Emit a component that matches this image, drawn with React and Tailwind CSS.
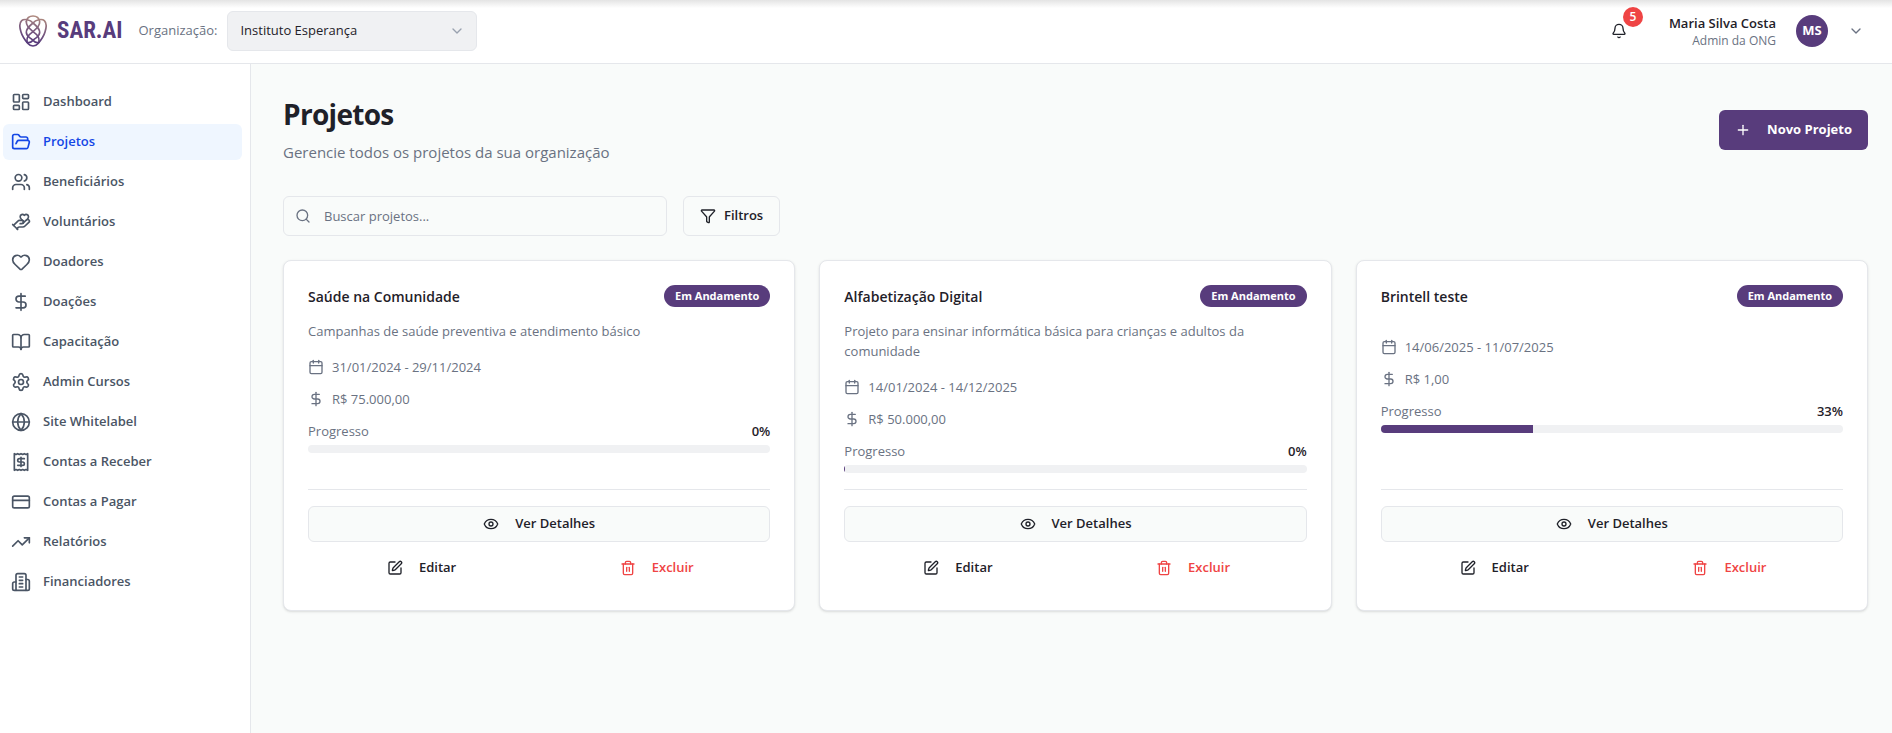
import React from "react";
import {
  LayoutDashboard, FolderOpen, Users, HandHeart, Heart, DollarSign, BookOpen, Settings, Globe,
  CreditCard, TrendingUp, Bell, ChevronDown, Plus, Search, Funnel, Calendar, Eye, SquarePen, Trash2,
} from "lucide-react";

function ReceiptIcon({ className }) {
  return (
    <svg className={className} viewBox="0 0 24 24" fill="none" stroke="currentColor" strokeWidth="2" strokeLinecap="round" strokeLinejoin="round" aria-hidden="true">
      <path d="M4 2v20l2-1 2 1 2-1 2 1 2-1 2 1 2-1 2 1V2l-2 1-2-1-2 1-2-1-2 1-2-1-2 1Z" />
      <path d="M16 8h-6a2 2 0 1 0 0 4h4a2 2 0 1 1 0 4H8" />
      <path d="M12 17.5v-11" />
    </svg>
  );
}

function BuildingIcon({ className }) {
  return (
    <svg className={className} viewBox="0 0 24 24" fill="none" stroke="currentColor" strokeWidth="2" strokeLinecap="round" strokeLinejoin="round" aria-hidden="true">
      <path d="M6 22V4a2 2 0 0 1 2-2h8a2 2 0 0 1 2 2v18Z" />
      <path d="M6 12H4a2 2 0 0 0-2 2v6a2 2 0 0 0 2 2h2" />
      <path d="M18 9h2a2 2 0 0 1 2 2v9a2 2 0 0 1-2 2h-2" />
      <path d="M10 6h4M10 10h4M10 14h4M10 18h4" />
    </svg>
  );
}

function LogoMark() {
  return (
    <svg className="h-8 w-7 shrink-0" viewBox="0 0 84 96" fill="none" stroke="url(#mark)" strokeWidth="5" strokeLinecap="round" strokeLinejoin="round" aria-hidden="true">
      <defs>
        <linearGradient id="mark" gradientUnits="userSpaceOnUse" x1="54" y1="0" x2="34" y2="80">
          <stop offset="0" stopColor="#b58f7e" />
          <stop offset="0.5" stopColor="#80607f" />
          <stop offset="1" stopColor="#583c7c" />
        </linearGradient>
      </defs>
      <path d="M22 20C24 8 33 3 42 3s18 5 20 17c1 12-10 22-20 30-12 9-20 16-18 30" />
      <path d="M22 20c-1 12 10 22 20 30 12 9 20 16 18 30" />
      <path d="M42 24C34 14 15 10 8 17s-6 22-2 34c4 14 12 24 20 34 4 5 9 8 16 8s12-3 16-8c8-10 16-20 20-34 4-12 5-27-2-34s-26-3-34 7" />
      <path d="M42 24c-10 8-20 16-20 28 0 14 10 14 20 24 6 6 12 8 18 6" />
      <path d="M42 24c10 8 20 16 20 28 0 14-10 14-20 24-6 6-12 8-18 6" />
    </svg>
  );
}

const navItems = [
  ["Dashboard", LayoutDashboard],
  ["Projetos", FolderOpen],
  ["Beneficiários", Users],
  ["Voluntários", HandHeart],
  ["Doadores", Heart],
  ["Doações", DollarSign],
  ["Capacitação", BookOpen],
  ["Admin Cursos", Settings],
  ["Site Whitelabel", Globe],
  ["Contas a Receber", ReceiptIcon],
  ["Contas a Pagar", CreditCard],
  ["Relatórios", TrendingUp],
  ["Financiadores", BuildingIcon],
];

const projects = [
  {
    title: "Saúde na Comunidade",
    description: "Campanhas de saúde preventiva e atendimento básico",
    dates: "31/01/2024 - 29/11/2024",
    budget: "R$ 75.000,00",
    label: "0%",
    progress: 0,
  },
  {
    title: "Alfabetização Digital",
    description: "Projeto para ensinar informática básica para crianças e adultos da comunidade",
    dates: "14/01/2024 - 14/12/2025",
    budget: "R$ 50.000,00",
    label: "0%",
    progress: 0.2,
  },
  {
    title: "Brintell teste",
    description: "",
    dates: "14/06/2025 - 11/07/2025",
    budget: "R$ 1,00",
    label: "33%",
    progress: 33,
  },
];

function Header() {
  return (
    <header className="flex h-16 items-center justify-between border-b border-gray-200 bg-linear-to-b from-[#e4e4e4] to-white to-[8px] pr-7 pb-px pl-[19px]">
      <div className="flex items-center">
        <a href="#" aria-label="SAR.AI" className="flex items-center gap-2.5">
          <LogoMark />
          <span className="font-['Roboto_Condensed',Roboto,sans-serif] text-[23px] leading-8 font-bold text-[#583c7c]">SAR.AI</span>
        </a>
        <label htmlFor="org" className="ml-4 text-[13px] text-gray-500">Organização:</label>
        <div className="relative ml-2.5 w-[250px]">
          <select id="org" className="h-10 w-full appearance-none rounded-md border border-gray-200 bg-[#f0f1f3] px-3 text-[13px] text-[#1f2129]">
            <option>Instituto Esperança</option>
          </select>
          <ChevronDown className="pointer-events-none absolute top-3 right-3 size-4 text-gray-400" />
        </div>
      </div>
      <div className="flex items-center">
        <button type="button" aria-label="Notificações" className="relative flex size-10 items-center justify-center text-[#1f2129]">
          <Bell className="size-4" />
          <span className="absolute -top-1 -right-1 flex size-5 items-center justify-center rounded-full bg-[#ef4444] text-[12px] font-semibold text-white">5</span>
        </button>
        <button type="button" className="ml-[30px] flex items-center">
          <span className="flex flex-col text-right">
            <span className="text-[13px] leading-5 font-semibold text-[#1f2129]">Maria Silva Costa</span>
            <span className="text-[12px] leading-4 font-medium text-gray-500">Admin da ONG</span>
          </span>
          <span className="ml-5 flex size-8 items-center justify-center rounded-full bg-[#583c7c] text-[13px] font-bold text-white">MS</span>
          <ChevronDown className="ml-5 size-4 text-gray-500" />
        </button>
      </div>
    </header>
  );
}

function Sidebar() {
  return (
    <nav className="flex w-[251px] shrink-0 flex-col gap-1 border-r border-gray-200 bg-white pt-5 pr-2 pl-[3px]">
      {navItems.map(([label, Icon]) => (
        <a
          key={label}
          href="#"
          className={
            label === "Projetos"
              ? "flex h-9 items-center gap-3 rounded-md bg-blue-50 px-2 text-[13px] font-semibold text-blue-700"
              : "flex h-9 items-center gap-3 rounded-md px-2 text-[13px] font-semibold text-gray-600"
          }
        >
          <Icon className="size-5" />
          {label}
        </a>
      ))}
    </nav>
  );
}

function ProjectCard({ project }) {
  return (
    <article className="flex flex-col rounded-lg border border-gray-200 bg-white p-6 shadow-sm">
      <div className="flex items-start justify-between">
        <h2 className="text-[14px] leading-6 font-semibold text-[#1f2129]">{project.title}</h2>
        <span className="rounded-full bg-[#583c7c] px-[11px] py-[3px] text-[11px] leading-4 font-bold text-white">Em Andamento</span>
      </div>
      <p className="mt-3 text-[13px] leading-5 text-gray-500">{project.description}</p>
      <div className="mt-4 mb-4 flex flex-col gap-3 text-[13px] leading-5 text-gray-500">
        <div className="flex items-center gap-2"><Calendar className="size-4" />{project.dates}</div>
        <div className="flex items-center gap-2"><DollarSign className="size-4" />{project.budget}</div>
        <div className="flex flex-col gap-1">
          <div className="flex justify-between">
            <span>Progresso</span>
            <span className="font-semibold text-[#1f2129]">{project.label}</span>
          </div>
          <div className="h-2 overflow-hidden rounded-full bg-[#f0f1f3]">
            <div className="h-full bg-[#583c7c]" style={{ width: `${project.progress}%` }} />
          </div>
        </div>
      </div>
      <div className="mt-auto grid grid-cols-2 gap-2 border-t border-gray-200 pt-4 text-[13px] font-semibold text-[#1f2129]">
        <button type="button" className="col-span-2 flex h-9 items-center justify-center gap-4 rounded-md border border-gray-200 bg-[#f9fbfa]">
          <Eye className="size-4" />Ver Detalhes
        </button>
        <button type="button" className="flex h-9 items-center justify-center gap-4"><SquarePen className="size-4" />Editar</button>
        <button type="button" className="flex h-9 items-center justify-center gap-4 text-[#ef4444]"><Trash2 className="size-4" />Excluir</button>
      </div>
    </article>
  );
}

export default function App() {
  return (
    <div className="flex min-h-screen flex-col bg-[#f9fbfa] font-['Open_Sans',sans-serif]">
      <Header />
      <div className="flex flex-1">
        <Sidebar />
        <main className="min-w-0 flex-1 py-8 pr-6 pl-8">
          <div className="flex items-center justify-between">
            <div>
              <h1 className="text-[28px] leading-9 font-bold tracking-tight text-[#1f2129]">Projetos</h1>
              <p className="mt-2 text-[15px] leading-6 text-gray-500">Gerencie todos os projetos da sua organização</p>
            </div>
            <button type="button" className="flex h-10 items-center gap-4 rounded-md bg-[#583c7c] px-4 text-[13px] font-bold text-white">
              <Plus className="size-4" />Novo Projeto
            </button>
          </div>
          <div className="mt-8 flex gap-4">
            <div className="relative w-full max-w-sm">
              <Search className="pointer-events-none absolute top-3 left-3 size-4 text-gray-500" />
              <input type="text" aria-label="Buscar projetos" placeholder="Buscar projetos..." className="h-10 w-full rounded-md border border-gray-200 bg-[#f9fbfa] pr-3 pl-10 text-[13px] placeholder:text-gray-500" />
            </div>
            <button type="button" className="flex h-10 items-center gap-2 rounded-md border border-gray-200 bg-[#f9fbfa] px-4 text-[13px] font-semibold text-[#1f2129]">
              <Funnel className="size-4" />Filtros
            </button>
          </div>
          <div className="mt-6 grid grid-cols-3 gap-6">
            {projects.map((project) => <ProjectCard key={project.title} project={project} />)}
          </div>
        </main>
      </div>
    </div>
  );
}
